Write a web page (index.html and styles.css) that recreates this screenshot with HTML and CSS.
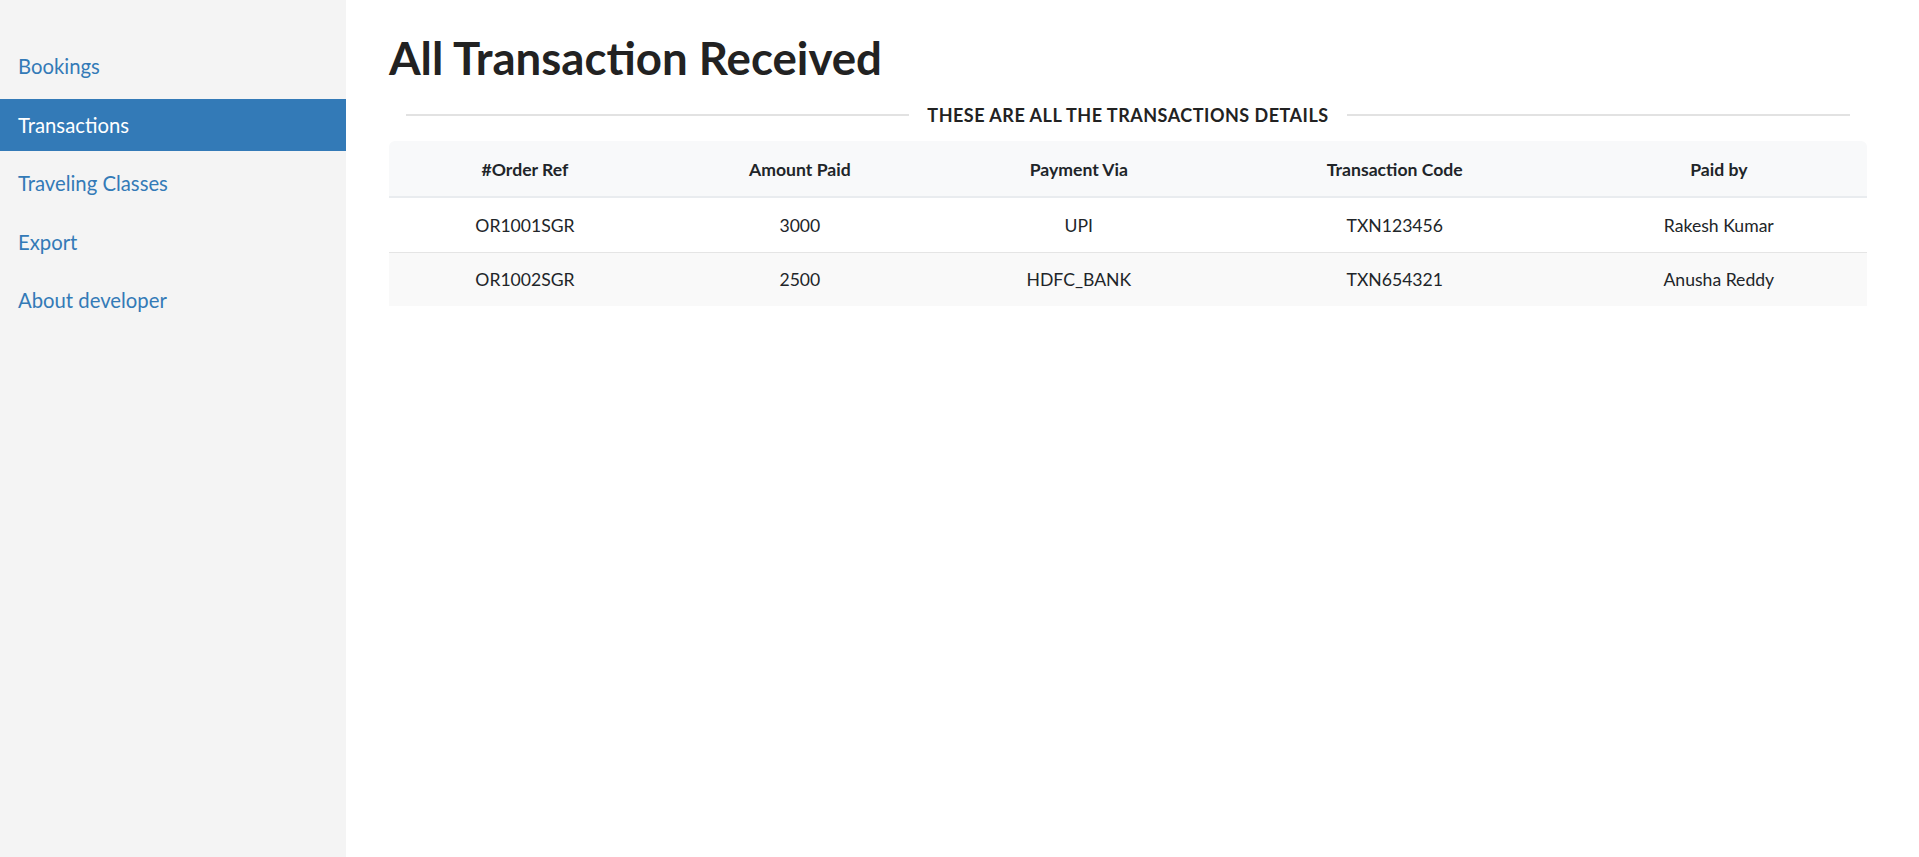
FILE: index.html
```html
<!DOCTYPE html>
<html lang="en">
<head>
<meta charset="utf-8">
<title>All Transaction Received</title>
<link rel="stylesheet" href="styles.css">
</head>
<body>
<div class="layout">
  <aside class="sidebar">
    <nav class="nav">
      <a class="nav-item" href="#">Bookings</a>
      <a class="nav-item active" href="#">Transactions</a>
      <a class="nav-item" href="#">Traveling Classes</a>
      <a class="nav-item" href="#">Export</a>
      <a class="nav-item" href="#">About developer</a>
    </nav>
  </aside>
  <main class="main">
    <h1 class="title">All Transaction Received</h1>
    <div class="divider">
      <span class="divider-line"></span>
      <span class="divider-text">THESE ARE ALL THE TRANSACTIONS DETAILS</span>
      <span class="divider-line"></span>
    </div>
    <table class="table">
      <colgroup>
        <col class="c1"><col class="c2"><col class="c3"><col class="c4"><col class="c5">
      </colgroup>
      <thead>
        <tr>
          <th>#Order Ref</th>
          <th>Amount Paid</th>
          <th>Payment Via</th>
          <th>Transaction Code</th>
          <th>Paid by</th>
        </tr>
      </thead>
      <tbody>
        <tr>
          <td>OR1001SGR</td>
          <td>3000</td>
          <td>UPI</td>
          <td>TXN123456</td>
          <td>Rakesh Kumar</td>
        </tr>
        <tr class="striped">
          <td>OR1002SGR</td>
          <td>2500</td>
          <td>HDFC_BANK</td>
          <td>TXN654321</td>
          <td>Anusha Reddy</td>
        </tr>
      </tbody>
    </table>
  </main>
</div>
</body>
</html>
```

FILE: styles.css
```css
* { box-sizing: border-box; }
html, body {
  margin: 0;
  padding: 0;
  height: 100%;
}
body {
  font-family: Lato, "Open Sans", sans-serif;
  color: #212529;
  background: #fff;
}
.layout {
  display: flex;
  min-height: 100vh;
}
.sidebar {
  width: 346px;
  flex: 0 0 346px;
  background: #f4f4f4;
}
.nav {
  display: flex;
  flex-direction: column;
  gap: 6.6px;
  padding-top: 40px;
}
.nav-item {
  display: block;
  padding: 14px 18px;
  font-size: 20.3px;
  line-height: 24px;
  color: #337ab7;
  text-decoration: none;
}
.nav-item.active {
  background: #337ab7;
  color: #fff;
}
.main {
  flex: 1;
  padding: 0 52px 0 43px;
}
.title {
  margin: 31px 0 0 0;
  font-size: 45.6px;
  line-height: 54px;
  font-weight: 700;
  color: #222;
}
.divider {
  display: flex;
  align-items: center;
  gap: 18px;
  margin: 19px 17px 15px 17px;
  height: 22px;
}
.divider-line {
  flex: 1;
  height: 2px;
  background: #e2e2e2;
}
.divider-text {
  font-size: 18px;
  line-height: 22px;
  font-weight: 700;
  letter-spacing: 0.5px;
  color: #222;
  white-space: nowrap;
}
.table {
  width: 100%;
  border-collapse: collapse;
  table-layout: fixed;
  font-size: 17.6px;
}
.c1 { width: 18.4%; }
.c2 { width: 18.8%; }
.c3 { width: 18.95%; }
.c4 { width: 23.8%; }
.c5 { width: 20.05%; }
.table th {
  background: #f8f9fa;
  font-weight: 700;
  line-height: 27px;
  padding: 15px 8px 13px 8px;
  text-align: center;
  border-bottom: 2px solid #e9ecef;
  color: #212529;
}
.table th:first-child { border-top-left-radius: 6px; }
.table th:last-child { border-top-right-radius: 6px; }
.table td {
  line-height: 27px;
  padding: 14px 8px 13px 8px;
  text-align: center;
  color: #212529;
}
.table tbody tr + tr td {
  border-top: 1px solid #e5e5e5;
}
.table tr.striped td {
  background: #f9f9f9;
  padding: 13px 8px;
}
```
